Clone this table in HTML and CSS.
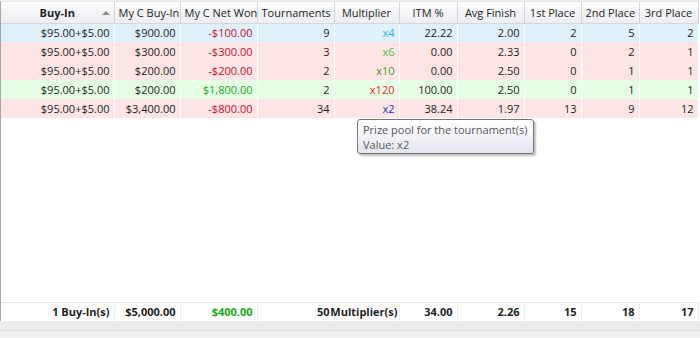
FILE: index.html
```html
<!DOCTYPE html>
<html>
<head>
<meta charset="utf-8">
<link rel="stylesheet" href="styles.css">
</head>
<body>
<div class="view">
  <div class="grid">
    <table class="tbl">
      <colgroup>
        <col style="width:113px"><col style="width:66px"><col style="width:77px"><col style="width:77px"><col style="width:65px"><col style="width:58px"><col style="width:67px"><col style="width:57px"><col style="width:58px"><col style="width:59px">
      </colgroup>
      <thead>
        <tr>
          <th class="sorted"><span class="hb">Buy-In</span><span class="arrow"></span></th>
          <th>My C Buy-In</th>
          <th>My C Net Won</th>
          <th>Tournaments</th>
          <th>Multiplier</th>
          <th>ITM %</th>
          <th>Avg Finish</th>
          <th>1st Place</th>
          <th>2nd Place</th>
          <th>3rd Place</th>
        </tr>
      </thead>
      <tbody>
        <tr class="blue">
          <td>$95.00+$5.00</td><td>$900.00</td><td class="neg">-$100.00</td><td>9</td><td class="m4">x4</td><td>22.22</td><td>2.00</td><td>2</td><td>5</td><td>2</td>
        </tr>
        <tr class="pink">
          <td>$95.00+$5.00</td><td>$300.00</td><td class="neg">-$300.00</td><td>3</td><td class="m6">x6</td><td>0.00</td><td>2.33</td><td>0</td><td>2</td><td>1</td>
        </tr>
        <tr class="pink">
          <td>$95.00+$5.00</td><td>$200.00</td><td class="neg">-$200.00</td><td>2</td><td class="m10">x10</td><td>0.00</td><td>2.50</td><td>0</td><td>1</td><td>1</td>
        </tr>
        <tr class="green">
          <td>$95.00+$5.00</td><td>$200.00</td><td class="pos">$1,800.00</td><td>2</td><td class="m120">x120</td><td>100.00</td><td>2.50</td><td>0</td><td>1</td><td>1</td>
        </tr>
        <tr class="pink">
          <td>$95.00+$5.00</td><td>$3,400.00</td><td class="neg">-$800.00</td><td>34</td><td class="m2">x2</td><td>38.24</td><td>1.97</td><td>13</td><td>9</td><td>12</td>
        </tr>
      </tbody>
    </table>
    <div class="empty"></div>
    <table class="tbl foot">
      <colgroup>
        <col style="width:113px"><col style="width:66px"><col style="width:77px"><col style="width:77px"><col style="width:65px"><col style="width:58px"><col style="width:67px"><col style="width:57px"><col style="width:58px"><col style="width:59px">
      </colgroup>
      <tr>
        <td>1 Buy-In(s)</td><td>$5,000.00</td><td class="pos">$400.00</td><td>50</td><td class="wide"><div class="endflex">Multiplier(s)</div></td><td>34.00</td><td>2.26</td><td>15</td><td>18</td><td>17</td>
      </tr>
    </table>
  </div>
  <div class="hscroll"></div>
  <div class="status"></div>
  <div class="tip">
    <div>Prize pool for the tournament(s)</div>
    <div>Value: x2</div>
  </div>
</div>
</body>
</html>
```
FILE: styles.css
```css
* { box-sizing: border-box; }
html, body { margin: 0; padding: 0; }
body {
  width: 700px;
  height: 338px;
  overflow: hidden;
  background: #f0f0f0;
  font-family: "Open Sans", "Noto Sans", "DejaVu Sans", sans-serif;
  font-size: 11px;
  color: #1e1e1e;
}
.view {
  position: relative;
  width: 700px;
  height: 338px;
  display: flex;
  flex-direction: column;
}
.grid {
  height: 320px;
  display: flex;
  flex-direction: column;
  background: #fff;
  border-top: 1px solid #e8e8e8;
  border-left: 1px solid #a8a8a8;
  margin-top: 1px;
}
.tbl {
  border-collapse: collapse;
  table-layout: fixed;
  width: 697px;
}
.tbl th {
  height: 21px;
  padding: 0 4px;
  font-weight: normal;
  text-align: center;
  white-space: nowrap;
  overflow: hidden;
  background: linear-gradient(#ffffff, #f3f4f6 50%, #eceef1);
  border-right: 1px solid #d3d5d9;
  border-bottom: 1px solid #d6d8dc;
  color: #1e1e1e;
}
.tbl th.sorted { position: relative; }
.hb { font-weight: bold; }
.arrow {
  position: absolute;
  right: 4px;
  top: 9px;
  width: 0;
  height: 0;
  border-left: 4px solid transparent;
  border-right: 4px solid transparent;
  border-bottom: 4px solid #8c8c8c;
}
.tbl td {
  height: 19px;
  padding: 0 4px 0 2px;
  text-align: right;
  white-space: nowrap;
  overflow: hidden;
  border-right: 1px solid rgba(255,255,255,0.35);
}
tr.blue td { background: #dff1fb; }
tr.pink td { background: #ffe5e5; }
tr.green td { background: #e5ffe5; }
.neg { color: #c8102e; }
.pos { color: #1aa81a; }
.m4 { color: #2fb6d6; }
.m6 { color: #4cc43c; }
.m10 { color: #3c9b1e; }
.m120 { color: #f01e28; }
.m2 { color: #1e28dc; }
.empty { flex: 1; }
.foot { border-top: 1px solid #e6e6e6; }
.foot td {
  font-weight: bold;
  border-right: 1px solid #ececec;
  color: #1e1e1e;
}
.foot td.pos { color: #1aa81a; }
.foot td.wide {
  overflow: visible;
  padding-right: 1px;
  padding-left: 0;
}
.endflex {
  display: flex;
  justify-content: flex-end;
  white-space: nowrap;
}
.hscroll {
  height: 10px;
  background: #ebebeb;
  border-bottom: 1px solid #dadada;
}
.status { flex: 1; background: #f0f0f0; }
.tip {
  position: absolute;
  left: 357px;
  top: 119px;
  width: 177px;
  height: 35px;
  padding: 2px 5px;
  border: 1px solid #767676;
  border-radius: 3px;
  background: linear-gradient(#ffffff, #e4e5f0);
  box-shadow: 2px 2px 2px rgba(0,0,0,0.25);
  color: #575757;
  line-height: 15px;
  white-space: nowrap;
}
```
